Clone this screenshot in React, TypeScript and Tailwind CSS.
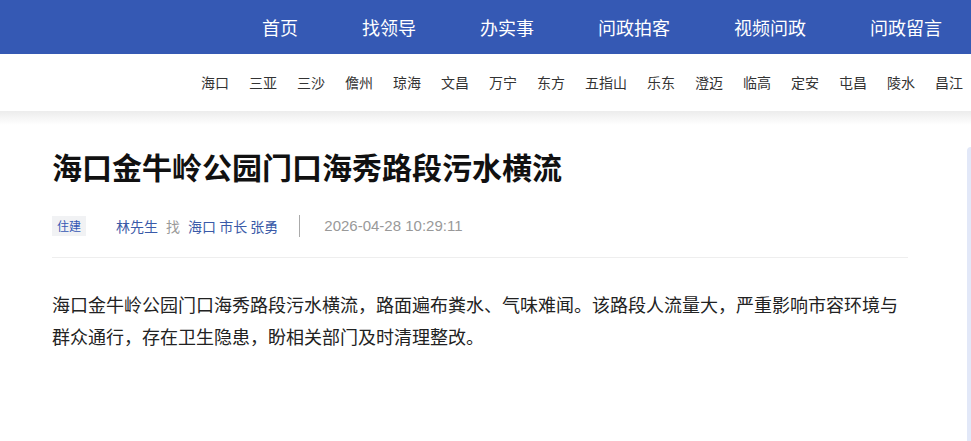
const mainNav = ['首页', '找领导', '办实事', '问政拍客', '视频问政', '问政留言'];

const cities = [
  '海口', '三亚', '三沙', '儋州', '琼海', '文昌', '万宁', '东方', '五指山',
  '乐东', '澄迈', '临高', '定安', '屯昌', '陵水', '昌江',
];

export default function App() {
  return (
    <div className="h-[441px] w-[971px] overflow-hidden bg-white font-['Noto_Sans_CJK_SC','Noto_Sans',sans-serif]">
      {/* top bar */}
      <header className="flex h-[54px] items-center justify-end gap-[64px] bg-[#3559b4] pr-[29px] text-[18px] text-white">
        {mainNav.map((n) => (
          <a key={n} className="leading-none">
            {n}
          </a>
        ))}
      </header>

      {/* city links */}
      <nav className="flex h-[57px] items-center justify-end gap-[20px] pr-[8px] text-[14px] text-[#333]">
        {cities.map((c) => (
          <a key={c}>{c}</a>
        ))}
      </nav>
      <div className="h-[14px] bg-gradient-to-b from-[#ececec] to-white" />

      <div className="flex pl-[52px]">
        <article className="w-[856px] shrink-0 pt-[21px]">
          <h1 className="text-[30px] font-bold leading-[40px] text-[#111]">
            海口金牛岭公园门口海秀路段污水横流
          </h1>

          <div className="mt-[29px] flex items-center border-b border-[#eeeeee] pb-[19px] text-[14px]">
            <span className="flex h-[20px] items-center bg-[#f1f2f4] px-[5px] text-[12px] text-[#3559b4]">
              住建
            </span>
            <span className="ml-[30px] text-[#3a5aa8]">林先生</span>
            <span className="ml-[8px] text-[#999]">找</span>
            <span className="ml-[8px] text-[#3a5aa8]">海口 市长 张勇</span>
            <span className="ml-[21px] h-[22px] w-px bg-[#aaa]" />
            <span className="ml-[24px] font-['Liberation_Sans',sans-serif] text-[15px] text-[#999]">
              2026-04-28 10:29:11
            </span>
          </div>

          <p className="mt-[30px] text-[18px] leading-[32px] text-[#222]">
            海口金牛岭公园门口海秀路段污水横流，路面遍布粪水、气味难闻。该路段人流量大，严重影响市容环境与群众通行，存在卫生隐患，盼相关部门及时清理整改。
          </p>
        </article>

        <aside className="ml-[59px] mt-[22px] h-[300px] flex-1 rounded-tl-lg bg-[#e2e8f8]" />
      </div>
    </div>
  );
}
